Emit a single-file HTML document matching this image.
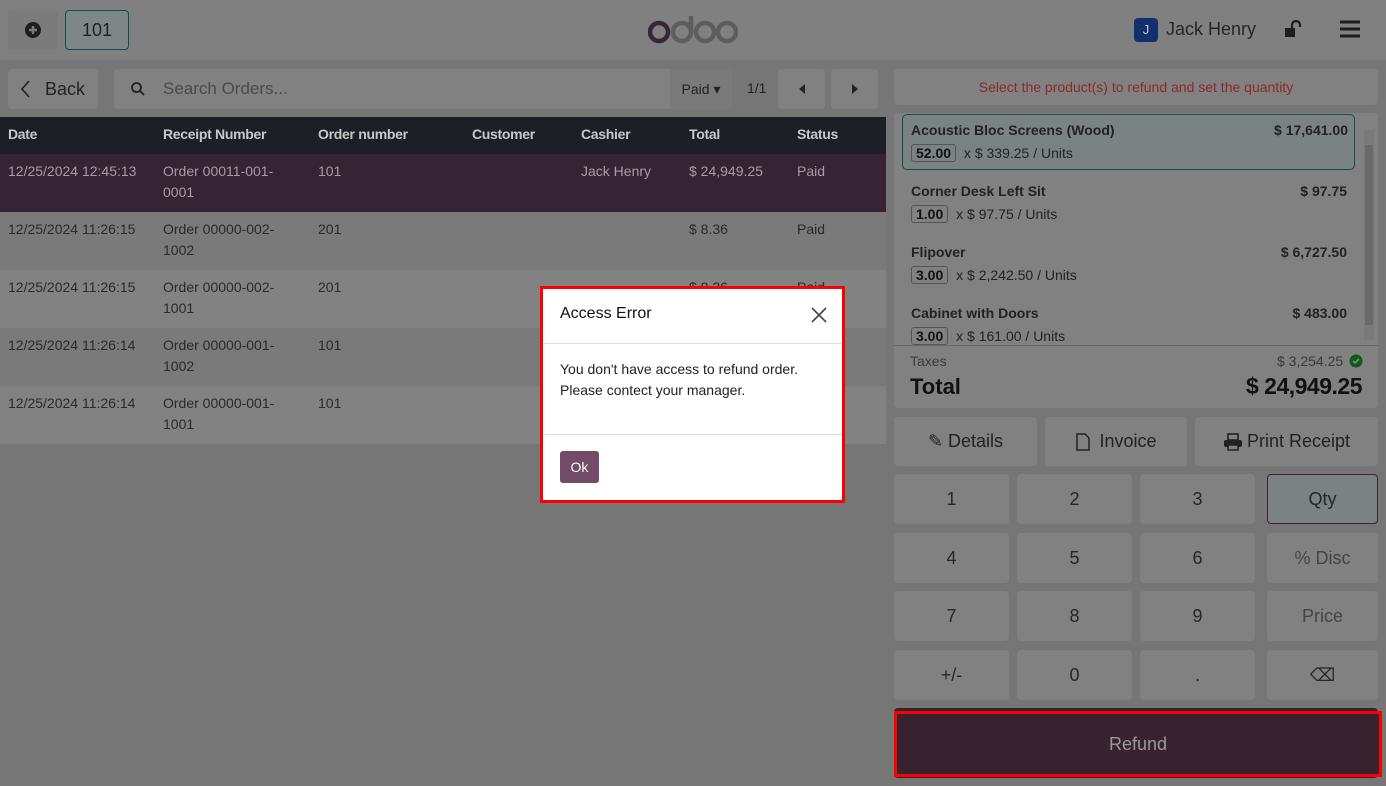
<!DOCTYPE html>
<html><head><meta charset="utf-8"><style>
*{box-sizing:border-box;margin:0;padding:0}
body{width:1386px;height:786px;overflow:hidden;background:#767676;font-family:"Liberation Sans",sans-serif;color:#222;position:relative}
.abs{position:absolute}
.top{left:0;top:0;width:1386px;height:60px;background:#808080}
.btn{background:#7b7b7b;border-radius:4px;display:flex;align-items:center;justify-content:center}
.th{position:absolute;top:126px;font-size:14px;color:#c8c8c8;font-weight:bold;letter-spacing:-0.3px}
.row{position:absolute;left:0;width:886px;height:58px;font-size:14px;color:#2a2a2a}
.row span{position:absolute;top:7px;line-height:21px}
.key{position:absolute;width:115px;height:50px;background:#818181;border-radius:4px;display:flex;align-items:center;justify-content:center;font-size:18px;color:#262626}
.qty{display:inline-block;border:1px solid #555;border-radius:3px;padding:0 4px;font-weight:bold;color:#111;font-size:14px;line-height:16px;margin-right:4px}
.line{position:absolute;left:911px;width:436px;font-size:14px;color:#222}
</style></head><body>
<div class="abs top"></div>
<div class="abs btn" style="left:8px;top:10px;width:50px;height:40px"><svg width="16" height="16"><circle cx="8" cy="8" r="8" fill="#1e1e1e"/><path d="M8 4v8M4 8h8" stroke="#7b7b7b" stroke-width="2.4"/></svg></div>
<div class="abs btn" style="left:65px;top:10px;width:64px;height:40px;border:1px solid #0f4f4f;background:#7e8686;font-size:18px">101</div>
<svg class="abs" style="left:648px;top:16px" width="90" height="28"><circle cx="11" cy="16" r="9" stroke="#3a2536" stroke-width="4.5" fill="none"/><circle cx="34" cy="16" r="9" stroke="#5d5d5d" stroke-width="4.5" fill="none"/><path d="M43 0v16" stroke="#5d5d5d" stroke-width="4.5"/><circle cx="57" cy="16" r="9" stroke="#5d5d5d" stroke-width="4.5" fill="none"/><circle cx="79" cy="16" r="9" stroke="#5d5d5d" stroke-width="4.5" fill="none"/></svg>
<div class="abs" style="left:1134px;top:18px;width:24px;height:24px;background:#12306e;border-radius:4px;color:#ccc;font-size:13px;text-align:center;line-height:24px">J</div>
<div class="abs" style="left:1166px;top:19px;font-size:18px;color:#262626">Jack Henry</div>
<svg class="abs" style="left:1284px;top:20px" width="20" height="18"><rect x="1" y="8" width="10" height="9" fill="#1e1e1e"/><path d="M8 8V5a4 4 0 0 1 8 0v2" stroke="#1e1e1e" stroke-width="2.2" fill="none"/></svg>
<svg class="abs" style="left:1340px;top:20px" width="20" height="18"><path d="M0 2h20M0 9h20M0 16h20" stroke="#1e1e1e" stroke-width="3"/></svg>

<div class="abs btn" style="left:8px;top:69px;width:90px;height:40px;font-size:18px;color:#222;background:#818181"><svg width="10" height="18" style="margin-right:14px"><path d="M8 1L1 9l7 8" stroke="#222" stroke-width="1.6" fill="none"/></svg>Back</div>
<div class="abs" style="left:114px;top:69px;width:618px;height:40px;background:#818181;border-radius:4px"></div>
<svg class="abs" style="left:130px;top:81px" width="16" height="16"><circle cx="6.5" cy="6.5" r="4.5" stroke="#222" stroke-width="1.8" fill="none"/><path d="M10 10l4 4" stroke="#222" stroke-width="1.8"/></svg>
<div class="abs" style="left:163px;top:79px;font-size:17px;color:#4a4a4a">Search Orders...</div>
<div class="abs" style="left:670px;top:69px;width:62px;height:40px;background:#7a7a7a;font-size:14px;line-height:40px;text-align:center;color:#222">Paid ▾</div>
<div class="abs" style="left:747px;top:80px;font-size:14px;color:#222">1/1</div>
<div class="abs btn" style="left:778px;top:69px;width:47px;height:40px;background:#818181"><svg width="6" height="10"><path d="M6 0v10L0 5z" fill="#222"/></svg></div>
<div class="abs btn" style="left:831px;top:69px;width:47px;height:40px;background:#818181"><svg width="6" height="10"><path d="M0 0v10l6-5z" fill="#222"/></svg></div>

<div class="abs" style="left:0;top:117px;width:886px;height:37px;background:#1c1f26"></div>
<div class="th" style="left:8px">Date</div><div class="th" style="left:163px">Receipt Number</div><div class="th" style="left:318px">Order number</div><div class="th" style="left:472px">Customer</div><div class="th" style="left:581px">Cashier</div><div class="th" style="left:689px">Total</div><div class="th" style="left:797px">Status</div>

<div class="row" style="top:154px;background:#362433;color:#a89ca6"><span style="left:8px">12/25/2024 12:45:13</span><span style="left:163px">Order 00011-001-<br>0001</span><span style="left:318px">101</span><span style="left:581px">Jack Henry</span><span style="left:689px">$ 24,949.25</span><span style="left:797px">Paid</span></div>
<div class="row" style="top:212px;background:#7a7a7a"><span style="left:8px">12/25/2024 11:26:15</span><span style="left:163px">Order 00000-002-<br>1002</span><span style="left:318px">201</span><span style="left:689px">$ 8.36</span><span style="left:797px">Paid</span></div>
<div class="row" style="top:270px;background:#828282"><span style="left:8px">12/25/2024 11:26:15</span><span style="left:163px">Order 00000-002-<br>1001</span><span style="left:318px">201</span><span style="left:689px">$ 8.36</span><span style="left:797px">Paid</span></div>
<div class="row" style="top:328px;background:#7a7a7a"><span style="left:8px">12/25/2024 11:26:14</span><span style="left:163px">Order 00000-001-<br>1002</span><span style="left:318px">101</span></div>
<div class="row" style="top:386px;background:#828282"><span style="left:8px">12/25/2024 11:26:14</span><span style="left:163px">Order 00000-001-<br>1001</span><span style="left:318px">101</span></div>

<div class="abs" style="left:894px;top:69px;width:484px;height:36px;background:#818181;border-radius:4px;color:#8a2a2a;font-size:14px;text-align:center;line-height:36px">Select the product(s) to refund and set the quantity</div>
<div class="abs" style="left:894px;top:113px;width:484px;height:295px;background:#818181;border-radius:4px"></div>
<div class="abs" style="left:1364px;top:130px;width:10px;height:210px;background:#7a7a7a"></div>
<div class="abs" style="left:1365px;top:145px;width:8px;height:180px;background:#6a6a6a"></div>
<div class="abs" style="left:902px;top:114px;width:453px;height:56px;border:1px solid #0f4f4f;border-radius:5px;background:#7b8282"></div>
<div class="line" style="top:122px;font-weight:bold">Acoustic Bloc Screens (Wood)<span style="float:right;margin-right:-1px">$ 17,641.00</span></div>
<div class="line" style="top:144px"><span class="qty">52.00</span> x $ 339.25 / Units</div>
<div class="line" style="top:183px;font-weight:bold">Corner Desk Left Sit<span style="float:right">$ 97.75</span></div>
<div class="line" style="top:205px"><span class="qty">1.00</span> x $ 97.75 / Units</div>
<div class="line" style="top:244px;font-weight:bold">Flipover<span style="float:right">$ 6,727.50</span></div>
<div class="line" style="top:266px"><span class="qty">3.00</span> x $ 2,242.50 / Units</div>
<div class="line" style="top:305px;font-weight:bold">Cabinet with Doors<span style="float:right">$ 483.00</span></div>
<div class="line" style="top:327px"><span class="qty">3.00</span> x $ 161.00 / Units</div>
<div class="abs" style="left:894px;top:345px;width:484px;height:1px;background:#6a6a6a"></div>
<div class="abs" style="left:910px;top:353px;font-size:14px;color:#3a3a3a">Taxes</div>
<div class="abs" style="left:1277px;top:353px;font-size:14px;color:#3a3a3a">$ 3,254.25</div>
<svg class="abs" style="left:1349px;top:354px" width="14" height="14"><circle cx="7" cy="7" r="6.5" fill="#0d5a1a"/><path d="M4 7l2 2 4-4" stroke="#818181" stroke-width="1.8" fill="none"/></svg>
<div class="abs" style="left:910px;top:374px;font-size:22px;font-weight:bold;color:#111">Total</div>
<div class="abs" style="right:24px;top:373px;font-size:23px;font-weight:bold;color:#111;letter-spacing:-0.5px">$ 24,949.25</div>

<div class="abs btn" style="left:894px;top:417px;width:143px;height:49px;font-size:18px;background:#818181">✎&nbsp;Details</div>
<div class="abs btn" style="left:1045px;top:417px;width:142px;height:49px;font-size:18px;background:#818181"><svg width="16" height="18" style="margin-right:8px"><path d="M2 1h8l4 4v12H2z" stroke="#222" stroke-width="1.5" fill="none"/></svg>Invoice</div>
<div class="abs btn" style="left:1195px;top:417px;width:183px;height:49px;font-size:18px;background:#818181"><svg width="20" height="18" style="margin-right:4px"><rect x="5" y="1" width="10" height="6" fill="none" stroke="#222" stroke-width="1.6"/><rect x="1" y="7" width="18" height="7" rx="2" fill="#222"/><rect x="5" y="12" width="10" height="5" fill="#818181" stroke="#222" stroke-width="1.5"/></svg>Print Receipt</div>

<div class="key" style="left:894px;top:474px">1</div><div class="key" style="left:1017px;top:474px">2</div><div class="key" style="left:1140px;top:474px">3</div>
<div class="key" style="left:1267px;top:474px;width:111px;border:1px solid #3a2536;background:#7b8282">Qty</div>
<div class="key" style="left:894px;top:533px">4</div><div class="key" style="left:1017px;top:533px">5</div><div class="key" style="left:1140px;top:533px">6</div>
<div class="key" style="left:1267px;top:533px;width:111px;color:#444">% Disc</div>
<div class="key" style="left:894px;top:591px">7</div><div class="key" style="left:1017px;top:591px">8</div><div class="key" style="left:1140px;top:591px">9</div>
<div class="key" style="left:1267px;top:591px;width:111px;color:#444">Price</div>
<div class="key" style="left:894px;top:650px">+/-</div><div class="key" style="left:1017px;top:650px">0</div><div class="key" style="left:1140px;top:650px">.</div>
<div class="key" style="left:1267px;top:650px;width:111px">⌫</div>
<div class="abs" style="left:894px;top:708px;width:484px;height:70px;background:#39222f;border-radius:4px"></div>
<div class="abs" style="left:894px;top:711px;width:488px;height:66px;border:3px solid #ff0000;color:#999;font-size:18px;text-align:center;line-height:60px;background:#39222f">Refund</div>

<div class="abs" style="left:540px;top:286px;width:305px;height:217px;border:3px solid #ff0000;background:#fff"></div>
<div class="abs" style="left:543px;top:289px;width:299px;height:211px;background:#fff">
 <div style="position:absolute;left:17px;top:16px;font-size:16px;color:#111">Access Error</div>
 <svg style="position:absolute;left:268px;top:18px" width="16" height="16"><path d="M1 1l14 14M15 1L1 15" stroke="#444" stroke-width="1.6"/></svg>
 <div style="position:absolute;left:0;top:54px;width:299px;height:1px;background:#ddd"></div>
 <div style="position:absolute;left:17px;top:70px;font-size:14px;line-height:21px;color:#222">You don't have access to refund order.<br>Please contect your manager.</div>
 <div style="position:absolute;left:0;top:145px;width:299px;height:1px;background:#ddd"></div>
 <div style="position:absolute;left:17px;top:162px;width:39px;height:32px;background:#714b67;border-radius:3px;color:#fff;font-size:14px;text-align:center;line-height:32px">Ok</div>
</div>
</body></html>
